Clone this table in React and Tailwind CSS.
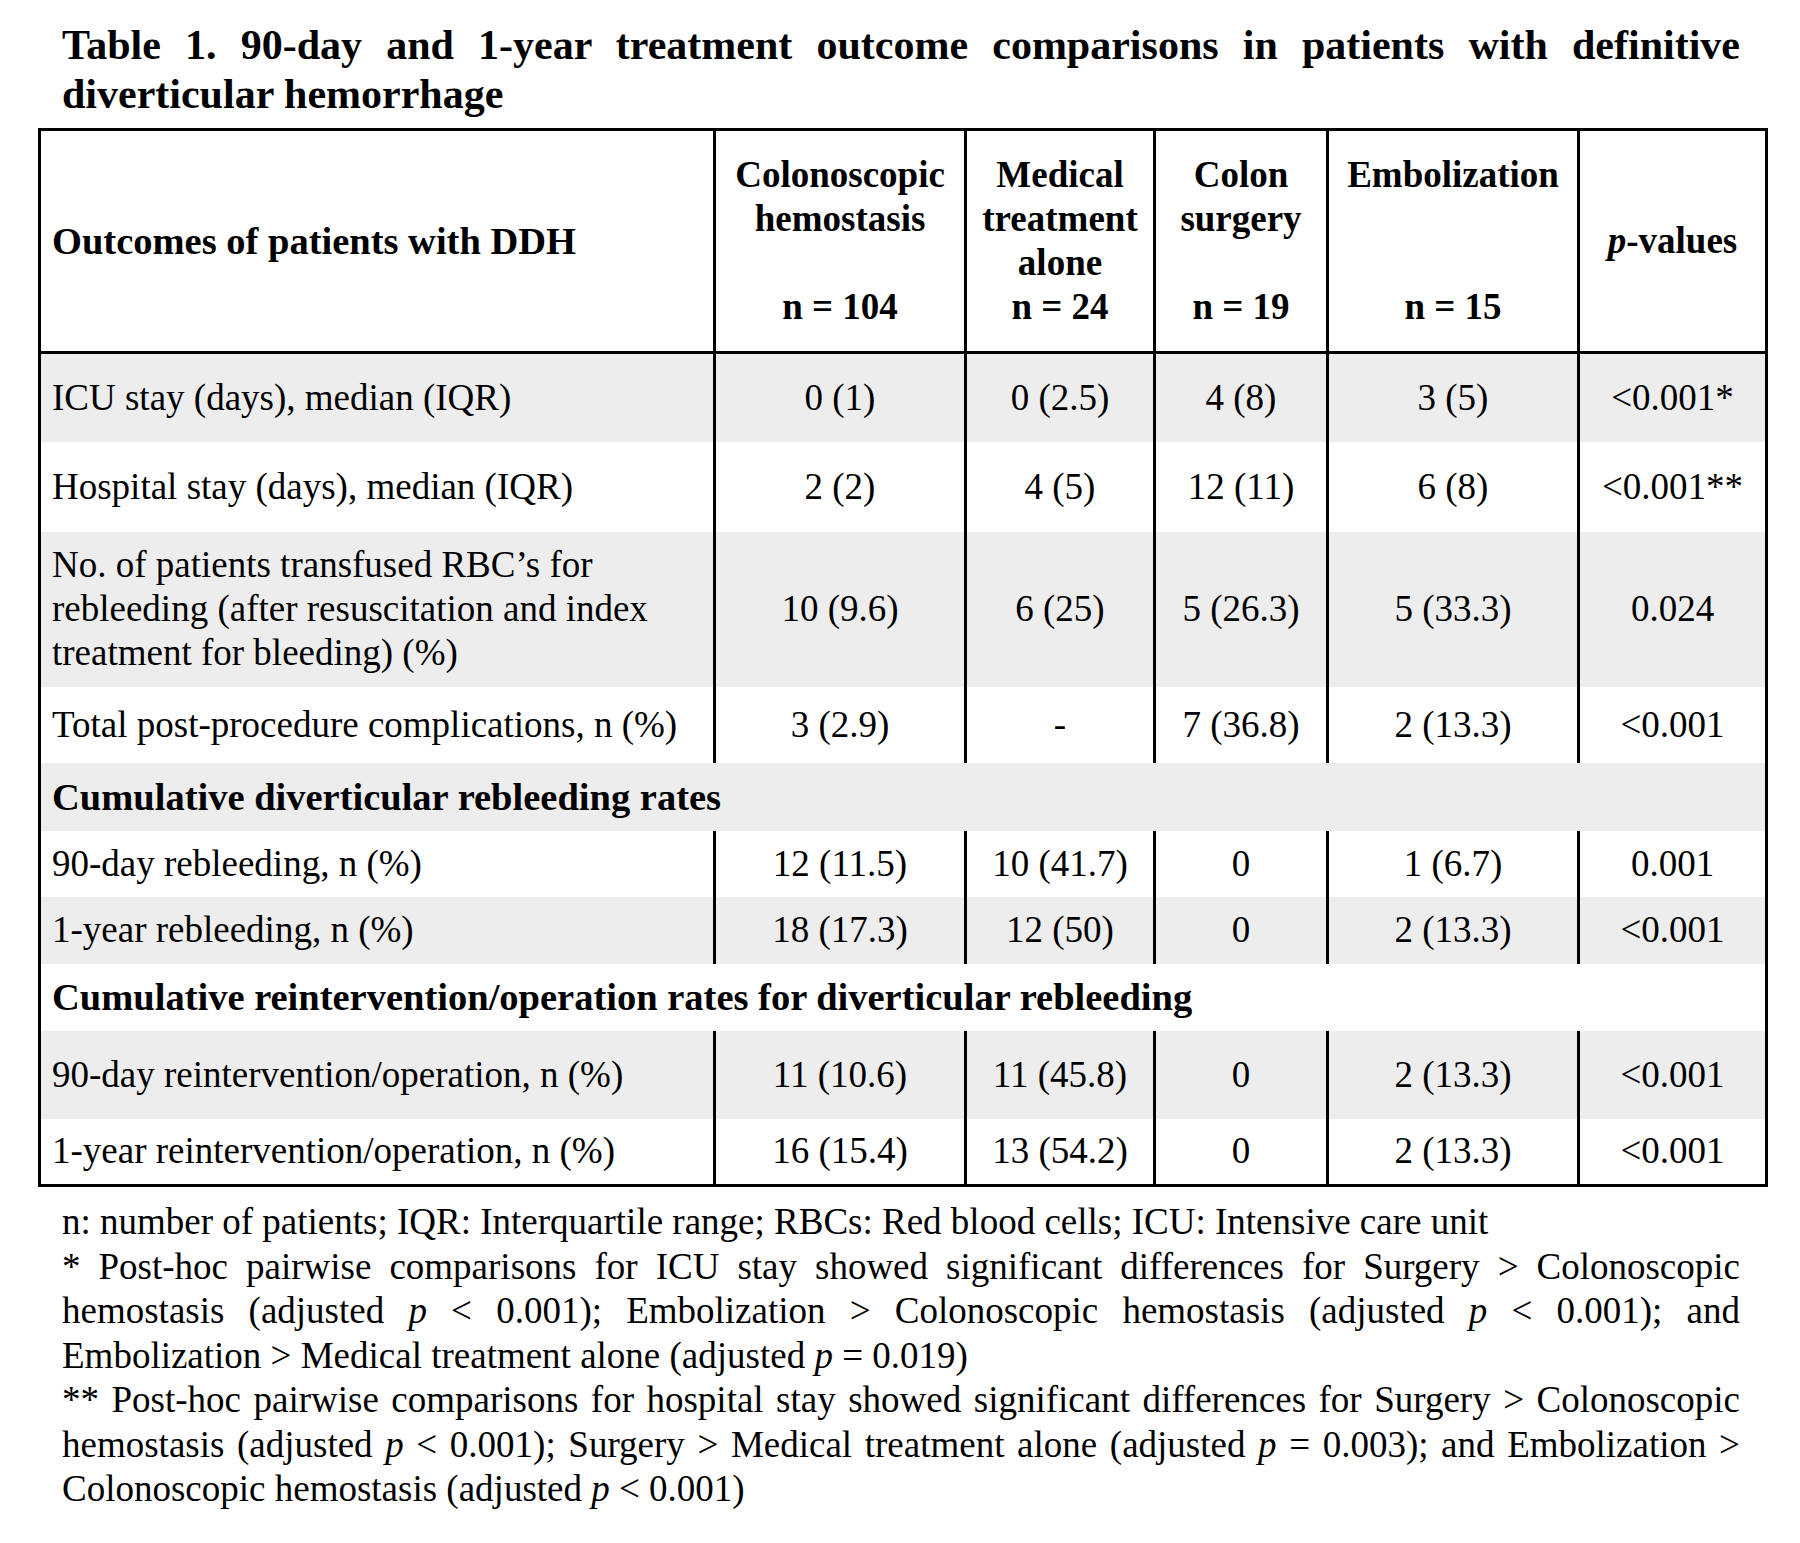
import React from "react";

const headers = [
  ["Colonoscopic", "hemostasis", "", "n = 104"],
  ["Medical", "treatment", "alone", "n = 24"],
  ["Colon", "surgery", "", "n = 19"],
  ["Embolization", "", "", "n = 15"],
];

const rows = [
  {
    label: ["ICU stay (days), median (IQR)"],
    values: ["0 (1)", "0 (2.5)", "4 (8)", "3 (5)", "<0.001*"],
    height: "h-[89px]",
    gray: true,
  },
  {
    label: ["Hospital stay (days), median (IQR)"],
    values: ["2 (2)", "4 (5)", "12 (11)", "6 (8)", "<0.001**"],
    height: "h-[90px]",
  },
  {
    label: [
      "No. of patients transfused RBC’s for",
      "rebleeding (after resuscitation and index",
      "treatment for bleeding) (%)",
    ],
    values: ["10 (9.6)", "6 (25)", "5 (26.3)", "5 (33.3)", "0.024"],
    height: "h-[155px]",
    gray: true,
  },
  {
    label: ["Total post-procedure complications, n (%)"],
    values: ["3 (2.9)", "-", "7 (36.8)", "2 (13.3)", "<0.001"],
    height: "h-[76px]",
  },
  {
    section: "Cumulative diverticular rebleeding rates",
    height: "h-[68px]",
    gray: true,
  },
  {
    label: ["90-day rebleeding, n (%)"],
    values: ["12 (11.5)", "10 (41.7)", "0", "1 (6.7)", "0.001"],
    height: "h-[66px]",
  },
  {
    label: ["1-year rebleeding, n (%)"],
    values: ["18 (17.3)", "12 (50)", "0", "2 (13.3)", "<0.001"],
    height: "h-[67px]",
    gray: true,
  },
  {
    section: "Cumulative reintervention/operation rates for diverticular rebleeding",
    height: "h-[67px]",
  },
  {
    label: ["90-day reintervention/operation, n (%)"],
    values: ["11 (10.6)", "11 (45.8)", "0", "2 (13.3)", "<0.001"],
    height: "h-[88px]",
    gray: true,
  },
  {
    label: ["1-year reintervention/operation, n (%)"],
    values: ["16 (15.4)", "13 (54.2)", "0", "2 (13.3)", "<0.001"],
    height: "h-[67px]",
  },
];

const P = () => <i>p</i>;

const App = () => {
  return (
    <div className="min-h-[1543px] bg-white pt-[21px] text-black font-['Liberation_Serif','Times_New_Roman',serif]">
      {/* title */}
      <div className="ml-[62px] w-[1678px] text-[42px] font-bold leading-[49px]">
        <div className="text-justify [text-align-last:justify]">
          Table 1. 90-day and 1-year treatment outcome comparisons in patients with definitive
        </div>
        <div>diverticular hemorrhage</div>
      </div>

      <table className="ml-[38px] mt-[9px] w-[1727px] table-fixed border-collapse border-[3px] border-black text-[37px] leading-[44px]">
        <colgroup>
          <col className="w-[675px]" />
          <col className="w-[251px]" />
          <col className="w-[189px]" />
          <col className="w-[173px]" />
          <col className="w-[251px]" />
          <col className="w-[188px]" />
        </colgroup>
        <thead>
          <tr className="h-[223px]">
            <th className="border-b-[3px] border-black pl-[11px] text-left align-middle text-[38.5px] font-bold">
              Outcomes of patients with DDH
            </th>
            {headers.map((lines, i) => (
              <th
                key={i}
                className="border-b-[3px] border-l-[3px] border-black px-0 text-center align-middle font-bold"
              >
                {lines.map((line, j) => (
                  <div key={j} className="h-[44px] whitespace-nowrap">
                    {line || "\u00a0"}
                  </div>
                ))}
              </th>
            ))}
            <th className="border-b-[3px] border-l-[3px] border-black text-center align-middle font-bold">
              <i>p</i>-values
            </th>
          </tr>
        </thead>
        <tbody>
          {rows.map((row, i) =>
            row.section ? (
              <tr key={i} className={`${row.height} ${row.gray ? "bg-[#ededed]" : "bg-white"}`}>
                <td colSpan={6} className="pl-[11px] align-middle text-[38.5px] font-bold whitespace-nowrap">
                  {row.section}
                </td>
              </tr>
            ) : (
              <tr key={i} className={`${row.height} ${row.gray ? "bg-[#ededed]" : "bg-white"}`}>
                <td className="pl-[11px] align-middle">
                  {row.label.map((l, j) => (
                    <div key={j} className="whitespace-nowrap">
                      {l}
                    </div>
                  ))}
                </td>
                {row.values.map((v, j) => (
                  <td
                    key={j}
                    className="border-l-[3px] border-black text-center align-middle whitespace-nowrap"
                  >
                    {v}
                  </td>
                ))}
              </tr>
            )
          )}
        </tbody>
      </table>

      {/* footnotes */}
      <div className="ml-[62px] mt-[13px] w-[1678px] text-[37px] leading-[44.5px]">
        <div>
          n: number of patients; IQR: Interquartile range; RBCs: Red blood cells; ICU: Intensive care unit
        </div>
        <div className="text-justify [text-align-last:justify]">
          * Post-hoc pairwise comparisons for ICU stay showed significant differences for Surgery &gt; Colonoscopic
        </div>
        <div className="text-justify [text-align-last:justify]">
          hemostasis (adjusted <P /> &lt; 0.001); Embolization &gt; Colonoscopic hemostasis (adjusted <P /> &lt; 0.001); and
        </div>
        <div>
          Embolization &gt; Medical treatment alone (adjusted <P /> = 0.019)
        </div>
        <div className="text-justify [text-align-last:justify]">
          ** Post-hoc pairwise comparisons for hospital stay showed significant differences for Surgery &gt; Colonoscopic
        </div>
        <div className="text-justify [text-align-last:justify]">
          hemostasis (adjusted <P /> &lt; 0.001); Surgery &gt; Medical treatment alone (adjusted <P /> = 0.003); and Embolization &gt;
        </div>
        <div>
          Colonoscopic hemostasis (adjusted <P /> &lt; 0.001)
        </div>
      </div>
    </div>
  );
};

export default App;
